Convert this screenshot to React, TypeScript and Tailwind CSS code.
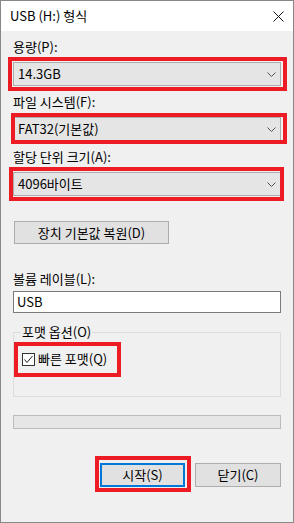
const font = { fontFamily: '"Noto Sans CJK KR", "Noto Sans", sans-serif' };

function RedFrame({ className }: { className: string }) {
  return <span className={`pointer-events-none absolute border-4 border-[#ed1c24] ${className}`} />;
}

function Chevron() {
  return (
    <svg width="9" height="5" viewBox="0 0 9 5" className="shrink-0">
      <path d="M0.5 0.5 L4.5 4.5 L8.5 0.5" fill="none" stroke="#555" strokeWidth="1" />
    </svg>
  );
}

function Combo({ value }: { value: string }) {
  return (
    <div className="flex h-[24px] items-center justify-between border border-[#adadad] bg-[#e5e5e5] pl-[4px] pr-[4px]">
      <span className="leading-[16px]">{value}</span>
      <Chevron />
    </div>
  );
}

function Label({ children }: { children: string }) {
  return <div className="h-[16px] leading-[16px]">{children}</div>;
}

export default function App() {
  return (
    <div
      className="flex h-[523px] w-[294px] flex-col border border-[#888888] bg-[#f0f0f0] text-[13px] text-black"
      style={font}
    >
      {/* title bar */}
      <div className="flex h-[30px] shrink-0 items-center justify-between bg-white pl-[9px] pr-[9px]">
        <span className="leading-[16px]">USB (H:) 형식</span>
        <svg width="11" height="11" viewBox="0 0 11 11">
          <path d="M0.5 0.5 L10.5 10.5 M10.5 0.5 L0.5 10.5" stroke="#111" strokeWidth="1" />
        </svg>
      </div>

      <div className="flex flex-col px-[12px] pt-[8px]">
        <Label>용량(P):</Label>
        <div className="relative mt-[7px]">
          <Combo value="14.3GB" />
          <RedFrame className="-left-[5px] -right-[6px] -top-[5px] -bottom-[5px]" />
        </div>

        <div className="mt-[8px]">
          <Label>파일 시스템(F):</Label>
        </div>
        <div className="relative mt-[7px]">
          <Combo value="FAT32(기본값)" />
          <RedFrame className="-left-[2px] -right-[6px] -top-[4px] -bottom-[3px]" />
        </div>

        <div className="mt-[8px]">
          <Label>할당 단위 크기(A):</Label>
        </div>
        <div className="relative mt-[7px]">
          <Combo value="4096바이트" />
          <RedFrame className="-left-[4px] -right-[3px] -top-[5px] -bottom-[5px]" />
        </div>

        <button className="ml-[1px] mt-[25px] flex h-[23px] w-[155px] items-center justify-center border border-[#adadad] bg-[#e1e1e1] leading-[16px]">
          장치 기본값 복원(D)
        </button>

        <div className="mt-[27px]">
          <Label>볼륨 레이블(L):</Label>
        </div>
        <div className="mt-[4px] flex h-[22px] items-center border border-[#7a7a7a] bg-white pl-[3px]">
          <span className="leading-[16px]">USB</span>
        </div>

        {/* format options group */}
        <div className="relative mt-[19px] h-[65px] border border-[#dcdcdc] pl-[8px] pt-[18px]">
          <span className="absolute -top-[9px] left-[7px] bg-[#f0f0f0] px-[1px] leading-[16px]">
            포맷 옵션(O)
          </span>
          <div className="relative flex h-[16px] w-fit items-center gap-[3px]">
            <span className="flex h-[13px] w-[13px] items-center justify-center border border-[#333] bg-white">
              <svg width="11" height="11" viewBox="0 0 11 11">
                <path d="M1.5 5.5 L4 8.5 L9.5 2" fill="none" stroke="#222" strokeWidth="1" />
              </svg>
            </span>
            <span className="leading-[16px]">빠른 포맷(Q)</span>
            <RedFrame className="-left-[8px] -right-[14px] -top-[9px] -bottom-[10px]" />
          </div>
        </div>

        {/* progress */}
        <div className="mt-[18px] h-[14px] border border-[#bcbcbc] bg-[#e6e6e6]" />

        {/* buttons */}
        <div className="mt-[34px] flex justify-end gap-[10px]">
          <div className="relative">
            <button className="flex h-[24px] w-[85px] items-center justify-center border-2 border-[#0078d7] bg-[#e1e1e1] leading-[16px]">
              시작(S)
            </button>
            <RedFrame className="-left-[5px] -right-[6px] -top-[7px] -bottom-[5px]" />
          </div>
          <button className="flex h-[24px] w-[86px] items-center justify-center border border-[#adadad] bg-[#e1e1e1] leading-[16px]">
            닫기(C)
          </button>
        </div>
      </div>
    </div>
  );
}
